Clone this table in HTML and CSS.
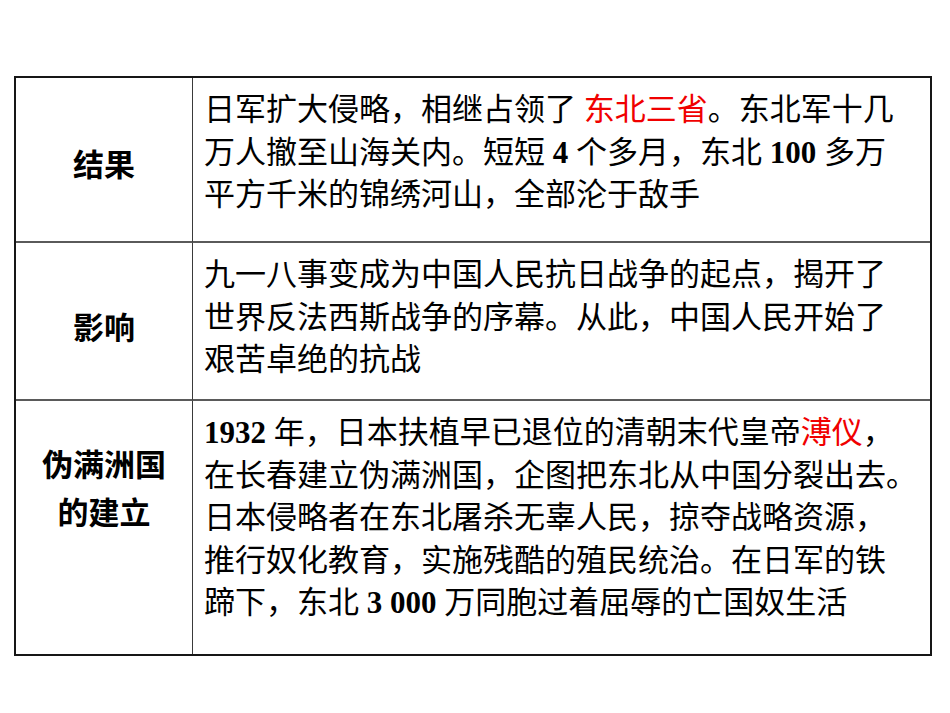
FILE: index.html
```html
<!DOCTYPE html>
<html lang="zh-CN">
<head>
<meta charset="utf-8">
<title>九一八事变</title>
<link rel="stylesheet" href="styles.css">
</head>
<body>
<div class="table">
  <div class="label row1"><span>结果</span></div>
  <div class="content row1">
    <div class="line">日军扩大侵略，相继占领了 <span class="red">东北三省</span>。东北军十几</div>
    <div class="line">万人撤至山海关内。短短 <b class="num">4</b> 个多月，东北 <b class="num">100</b> 多万</div>
    <div class="line">平方千米的锦绣河山，全部沦于敌手</div>
  </div>

  <div class="label row2"><span>影响</span></div>
  <div class="content row2">
    <div class="line">九一八事变成为中国人民抗日战争的起点，揭开了</div>
    <div class="line">世界反法西斯战争的序幕。从此，中国人民开始了</div>
    <div class="line">艰苦卓绝的抗战</div>
  </div>

  <div class="label row3"><span>伪满洲国<br>的建立</span></div>
  <div class="content row3">
    <div class="line"><b class="num">1932</b> 年，日本扶植早已退位的清朝末代皇帝<span class="red">溥仪</span>，</div>
    <div class="line">在长春建立伪满洲国，企图把东北从中国分裂出去。</div>
    <div class="line">日本侵略者在东北屠杀无辜人民，掠夺战略资源，</div>
    <div class="line">推行奴化教育，实施残酷的殖民统治。在日军的铁</div>
    <div class="line">蹄下，东北 <b class="num">3 000</b> 万同胞过着屈辱的亡国奴生活</div>
  </div>
</div>
</body>
</html>
```
FILE: styles.css
```css
html, body {
  margin: 0;
  padding: 0;
  background: #ffffff;
}

body {
  width: 950px;
  height: 713px;
  overflow: hidden;
}

.table {
  margin: 76px 0 0 14px;
  width: 914px;
  border: 2px solid #161616;
  display: grid;
  grid-template-columns: 177px 1fr;
  grid-template-rows: 165px 158px 253px;
}

.label {
  border-right: 1px solid #3a3a3a;
  display: flex;
  align-items: center;
  justify-content: center;
  text-align: center;
  font-family: "Noto Sans CJK SC", sans-serif;
  font-weight: 700;
  font-size: 31px;
  line-height: 48px;
  color: #000;
  box-sizing: border-box;
}

.content {
  font-family: "Liberation Serif", "Noto Sans CJK SC", serif;
  font-size: 31px;
  line-height: 42.5px;
  color: #000;
  padding: 11px 0 0 11px;
  box-sizing: border-box;
  white-space: nowrap;
}

.row1, .row2 {
  border-bottom: 2px solid #5a5a5a;
}

.label.row1 { padding-top: 7px; }
.label.row2 { padding-top: 10px; }
.label.row3 { padding-bottom: 81px; }

.line {
  height: 42.5px;
}

.num {
  font-weight: 700;
}

.red {
  color: #f00000;
}
```
